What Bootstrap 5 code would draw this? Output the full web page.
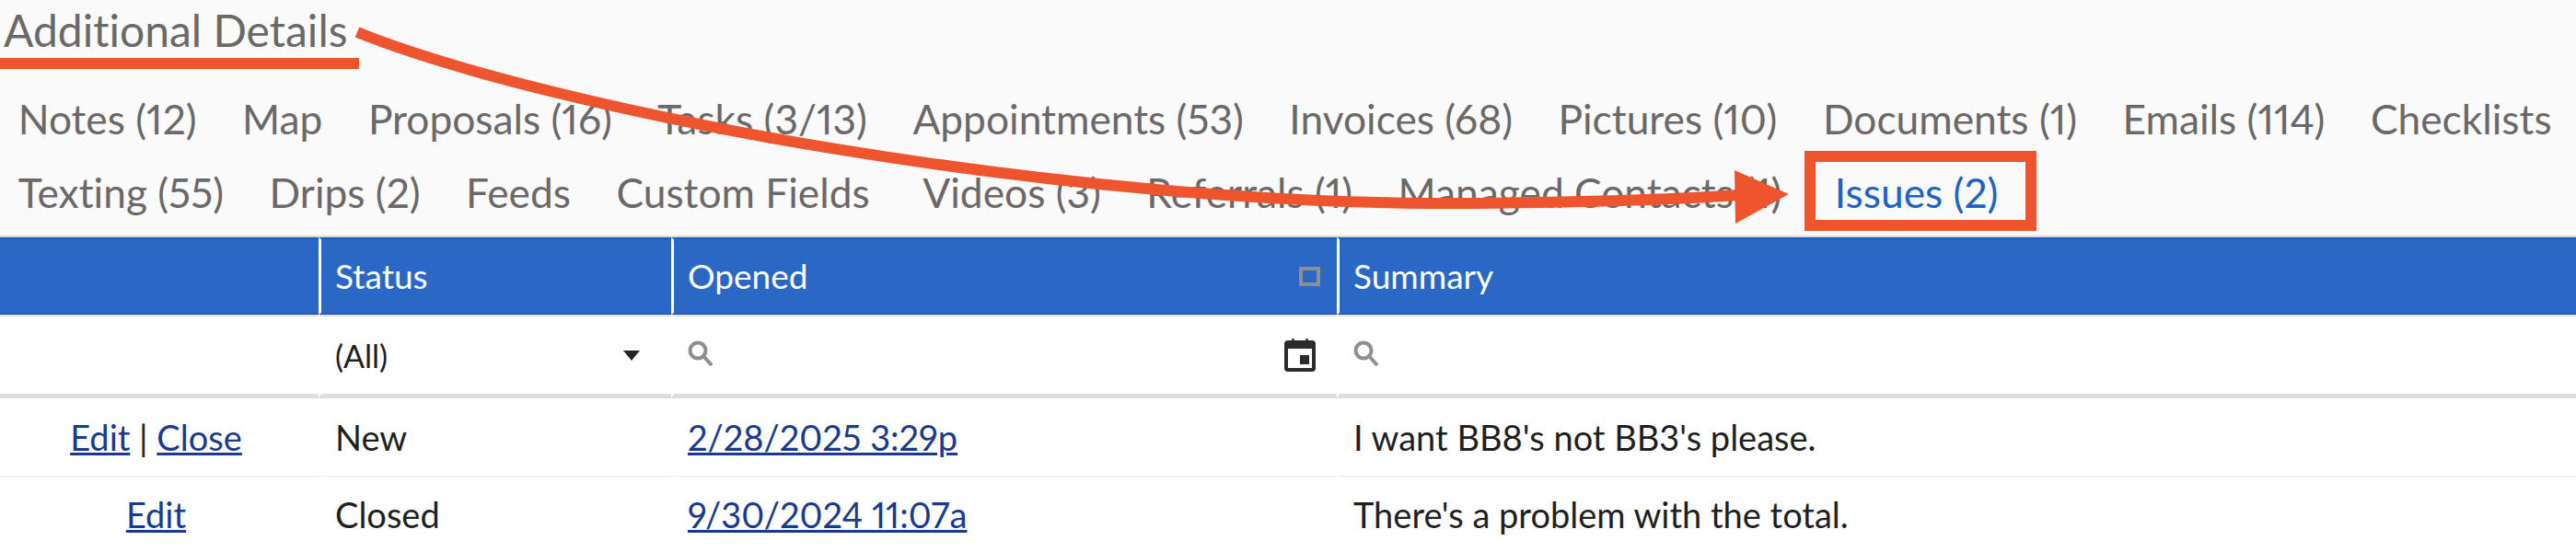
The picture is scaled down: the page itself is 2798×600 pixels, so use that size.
<!DOCTYPE html>
<html lang="en">
<head>
    <meta charset="UTF-8" />
    <title>Additional Details</title>
    <link href="https://cdn.jsdelivr.net/npm/bootstrap@5.3.0/dist/css/bootstrap.min.css" rel="stylesheet" />
    <style>
        html, body { height: 600px; overflow: hidden; }
        body { background: #fafafa; font-family: "Lato", "Liberation Sans", sans-serif; font-variant-ligatures: none; font-variant-numeric: proportional-nums; position: relative; }
        .details-title { font-family: inherit; font-size: 48px; line-height: 58px; font-weight: 400; color: #6b6867; margin: 4px 0 0 4px; height: 75px; }
        .detail-tabs { width: 2803px; height: 167px; margin: 10px 0 0 -5px; align-content: flex-start; }
        .detail-tabs .nav-link { font-size: 44.3px; line-height: 56px; padding: 12px 24.75px; color: #6b6867; }
        .detail-tabs .nav-link.active { color: #1d62c6; }
        .issue-grid { --bs-table-bg: transparent; table-layout: fixed; width: 2798px; margin: 0; border-collapse: separate; border-spacing: 0; border-top: 2px solid #d9d9d9; }
        .issue-grid th, .issue-grid td { padding: 0 18px 0 15px; border: 0; vertical-align: middle; font-size: 38px; font-weight: 400; color: #1f1f1f; background: #fff; box-shadow: none; }
        .issue-grid th + th, .issue-grid td + td { border-left: 3px solid #fff; }
        .issue-grid .head-row th { height: 84px; color: #fff; background: #2b68c6; border-top: 2px solid #1b5cc0; border-bottom: 2px solid #1b5cc0; font-size: 37px; }
        .issue-grid .filter-row td { height: 91px; border-top: 2px solid #e2e2e0; border-bottom: 5px solid #dedede; vertical-align: top; padding-top: 24px; }
        .issue-grid .filter-row .all-cell { font-size: 34px; padding-top: 17px; }
        .issue-grid .action-cell { padding: 0 20px 0 13px; }
        .issue-grid .first-row td { height: 86px; border-bottom: 2px solid #f3f3f3; }
        .issue-grid .second-row td { height: 81px; }
        .issue-grid a { color: #1a3a8f; text-decoration-thickness: 3px; }
        .select-caret { width: 0; height: 0; border-left: 9px solid transparent; border-right: 9px solid transparent; border-top: 11px solid #222; }
        .sort-box { width: 23px; height: 21px; border: 4px solid #8f8f8f; }
        .search-glyph { display: block; margin-top: 2px; }
        .cal-glyph { display: block; margin-right: 5px; }
        .annot-layer { position: absolute; left: 0; top: 0; pointer-events: none; }
    </style>
</head>
<body>

<h4 class="details-title">Additional Details</h4>

<!-- Tabs -->
<ul class="nav flex-wrap detail-tabs">
    <li class="nav-item"><a class="nav-link" href="#">Notes (12)</a></li>
    <li class="nav-item"><a class="nav-link" href="#">Map</a></li>
    <li class="nav-item"><a class="nav-link" href="#">Proposals (16)</a></li>
    <li class="nav-item"><a class="nav-link" href="#">Tasks (3/13)</a></li>
    <li class="nav-item"><a class="nav-link" href="#">Appointments (53)</a></li>
    <li class="nav-item"><a class="nav-link" href="#">Invoices (68)</a></li>
    <li class="nav-item"><a class="nav-link" href="#">Pictures (10)</a></li>
    <li class="nav-item"><a class="nav-link" href="#">Documents (1)</a></li>
    <li class="nav-item"><a class="nav-link" href="#">Emails (114)</a></li>
    <li class="nav-item"><a class="nav-link" href="#">Checklists</a></li>
    <li class="nav-item"><a class="nav-link" href="#">Texting (55)</a></li>
    <li class="nav-item"><a class="nav-link" href="#">Drips (2)</a></li>
    <li class="nav-item"><a class="nav-link" href="#">Feeds</a></li>
    <li class="nav-item"><a class="nav-link" href="#">Custom Fields</a></li>
    <li class="nav-item ms-2"><a class="nav-link" href="#">Videos (3)</a></li>
    <li class="nav-item"><a class="nav-link" href="#">Referrals (1)</a></li>
    <li class="nav-item"><a class="nav-link" href="#">Managed Contacts (1)</a></li>
    <li class="nav-item ms-2"><a class="nav-link active" href="#">Issues (2)</a></li>
</ul>

<!-- Issues grid -->
<table class="table issue-grid">
    <colgroup>
        <col style="width: 346px" />
        <col style="width: 383px" />
        <col style="width: 723px" />
        <col />
    </colgroup>
    <thead>
        <tr class="head-row">
            <th></th>
            <th>Status</th>
            <th>
                <div class="d-flex justify-content-between align-items-center">
                    <span>Opened</span>
                    <span class="sort-box"></span>
                </div>
            </th>
            <th>Summary</th>
        </tr>
        <tr class="filter-row">
            <td></td>
            <td class="all-cell">
                <div class="d-flex justify-content-between align-items-center pe-3">
                    <span>(All)</span>
                    <span class="select-caret"></span>
                </div>
            </td>
            <td>
                <div class="d-flex justify-content-between align-items-start">
                    <svg class="search-glyph" width="28" height="28" viewBox="0 0 28 28" fill="none" stroke="#8f8f8f" stroke-width="4"><circle cx="11" cy="11" r="8.5"/><path d="M17 17l9 10"/></svg>
                    <svg class="cal-glyph" width="34" height="36" viewBox="0 0 34 36"><path d="M8 0h3v3H8zM23 0h3v3h-3z" fill="#555"/><rect y="2" width="34" height="34" rx="4" fill="#2b2b2b"/><rect x="4" y="11" width="26" height="21" fill="#fff"/><rect x="17" y="18" width="10" height="10" fill="#2b2b2b"/></svg>
                </div>
            </td>
            <td>
                <svg class="search-glyph" width="28" height="28" viewBox="0 0 28 28" fill="none" stroke="#8f8f8f" stroke-width="4"><circle cx="11" cy="11" r="8.5"/><path d="M17 17l9 10"/></svg>
            </td>
        </tr>
    </thead>
    <tbody>
        <tr class="first-row">
            <td class="text-center action-cell"><a href="#">Edit</a> | <a href="#">Close</a></td>
            <td>New</td>
            <td><a href="#">2/28/2025 3:29p</a></td>
            <td>I want BB8's not BB3's please.</td>
        </tr>
        <tr class="second-row">
            <td class="text-center action-cell"><a href="#">Edit</a></td>
            <td>Closed</td>
            <td><a href="#">9/30/2024 11:07a</a></td>
            <td>There's a problem with the total.</td>
        </tr>
    </tbody>
</table>

<!-- Annotation drawn over the screenshot -->
<svg class="annot-layer" width="2798" height="600" viewBox="0 0 2798 600">
    <rect x="0" y="63" width="390" height="12" fill="#ee552e"/>
    <path d="M388 35C600 120 1150 225 1600 221C1700 220 1800 218 1890 212" fill="none" stroke="#ee552e" stroke-width="12"/>
    <path d="M1884 185L1943 211L1885 243Z" fill="#ee552e"/>
    <rect x="1966" y="170" width="240" height="75" fill="none" stroke="#ee552e" stroke-width="12"/>
</svg>

<script src="https://cdn.jsdelivr.net/npm/bootstrap@5.3.0/dist/js/bootstrap.bundle.min.js"></script>
</body>
</html>
